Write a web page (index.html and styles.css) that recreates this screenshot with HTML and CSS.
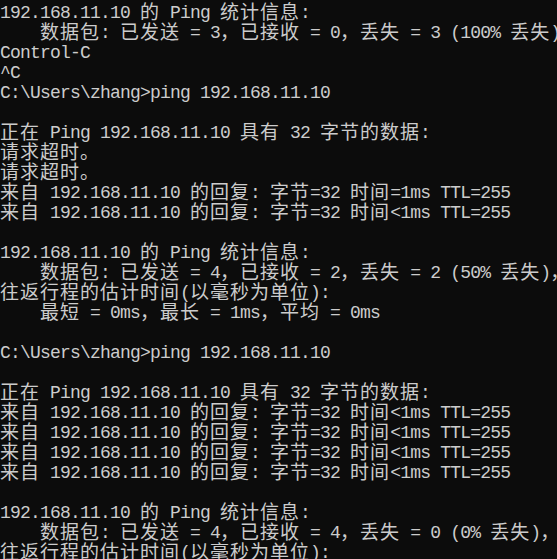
FILE: index.html
```html
<!DOCTYPE html>
<html lang="zh-CN">
<head>
<meta charset="utf-8">
<title>命令提示符</title>
<link rel="stylesheet" href="styles.css">
</head>
<body>
<main class="console">
<div class="l">192.168.11.10 <span class="z">的</span> Ping <span class="z">统计信息</span>:</div>
<div class="l">    <span class="z">数据包</span>: <span class="z">已发送</span> = 3<span class="z">，已接收</span> = 0<span class="z">，丢失</span> = 3 (100% <span class="z">丢失</span>)<span class="z">，</span></div>
<div class="l">Control-C</div>
<div class="l">^C</div>
<div class="l">C:\Users\zhang&gt;ping 192.168.11.10</div>
<div class="l"></div>
<div class="l"><span class="z">正在</span> Ping 192.168.11.10 <span class="z">具有</span> 32 <span class="z">字节的数据</span>:</div>
<div class="l"><span class="z">请求超时。</span></div>
<div class="l"><span class="z">请求超时。</span></div>
<div class="l"><span class="z">来自</span> 192.168.11.10 <span class="z">的回复</span>: <span class="z">字节</span>=32 <span class="z">时间</span>=1ms TTL=255</div>
<div class="l"><span class="z">来自</span> 192.168.11.10 <span class="z">的回复</span>: <span class="z">字节</span>=32 <span class="z">时间</span>&lt;1ms TTL=255</div>
<div class="l"></div>
<div class="l">192.168.11.10 <span class="z">的</span> Ping <span class="z">统计信息</span>:</div>
<div class="l">    <span class="z">数据包</span>: <span class="z">已发送</span> = 4<span class="z">，已接收</span> = 2<span class="z">，丢失</span> = 2 (50% <span class="z">丢失</span>)<span class="z">，</span></div>
<div class="l"><span class="z">往返行程的估计时间</span>(<span class="z">以毫秒为单位</span>):</div>
<div class="l">    <span class="z">最短</span> = 0ms<span class="z">，最长</span> = 1ms<span class="z">，平均</span> = 0ms</div>
<div class="l"></div>
<div class="l">C:\Users\zhang&gt;ping 192.168.11.10</div>
<div class="l"></div>
<div class="l"><span class="z">正在</span> Ping 192.168.11.10 <span class="z">具有</span> 32 <span class="z">字节的数据</span>:</div>
<div class="l"><span class="z">来自</span> 192.168.11.10 <span class="z">的回复</span>: <span class="z">字节</span>=32 <span class="z">时间</span>&lt;1ms TTL=255</div>
<div class="l"><span class="z">来自</span> 192.168.11.10 <span class="z">的回复</span>: <span class="z">字节</span>=32 <span class="z">时间</span>&lt;1ms TTL=255</div>
<div class="l"><span class="z">来自</span> 192.168.11.10 <span class="z">的回复</span>: <span class="z">字节</span>=32 <span class="z">时间</span>&lt;1ms TTL=255</div>
<div class="l"><span class="z">来自</span> 192.168.11.10 <span class="z">的回复</span>: <span class="z">字节</span>=32 <span class="z">时间</span>&lt;1ms TTL=255</div>
<div class="l"></div>
<div class="l">192.168.11.10 <span class="z">的</span> Ping <span class="z">统计信息</span>:</div>
<div class="l">    <span class="z">数据包</span>: <span class="z">已发送</span> = 4<span class="z">，已接收</span> = 4<span class="z">，丢失</span> = 0 (0% <span class="z">丢失</span>)<span class="z">，</span></div>
<div class="l"><span class="z">往返行程的估计时间</span>(<span class="z">以毫秒为单位</span>):</div>
</main>
</body>
</html>
```

FILE: styles.css
```css
html, body {
  margin: 0;
  padding: 0;
  background: #0c0c0c;
  overflow: hidden;
}

.console {
  display: flex;
  flex-direction: column;
  color: #cccccc;
  font-family: "Liberation Mono", monospace;
  font-size: 18px;
  letter-spacing: -0.8px;
}

.l {
  height: 20px;
  line-height: 26px;
  white-space: pre;
  flex: none;
}

.z {
  font-family: "Noto Sans CJK SC", sans-serif;
  font-size: 19px;
  letter-spacing: 1px;
  line-height: 0;
  vertical-align: -1px;
}
```
